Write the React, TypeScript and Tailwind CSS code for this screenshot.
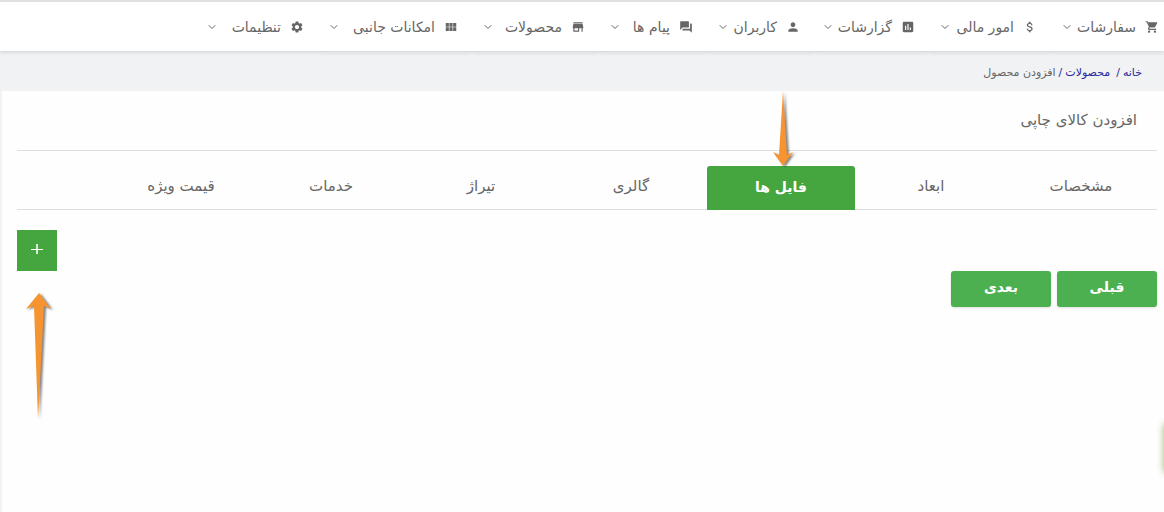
import { useState } from "react";
import type { IconType } from "react-icons";
import {
  MdAssessment,
  MdAttachMoney,
  MdForum,
  MdPerson,
  MdSettings,
  MdShoppingCart,
  MdStore,
  MdViewModule,
} from "react-icons/md";
import { FiChevronDown } from "react-icons/fi";

interface MenuItem {
  label: string;
  icon: IconType;
  width: string;
}

const menu: MenuItem[] = [
  { label: "سفارشات", icon: MdShoppingCart, width: "w-[122px]" },
  { label: "امور مالی", icon: MdAttachMoney, width: "w-[122px]" },
  { label: "گزارشات", icon: MdAssessment, width: "w-[115px]" },
  { label: "کاربران", icon: MdPerson, width: "w-[107px]" },
  { label: "پیام ها", icon: MdForum, width: "w-[108px]" },
  { label: "محصولات", icon: MdStore, width: "w-[127px]" },
  { label: "امکانات جانبی", icon: MdViewModule, width: "w-[154px]" },
  { label: "تنظیمات", icon: MdSettings, width: "w-[122px]" },
];

const tabs = ["مشخصات", "ابعاد", "فایل ها", "گالری", "تیراژ", "خدمات", "قیمت ویژه"];

function TopMenu() {
  return (
    <nav className="relative z-10 h-[51px] border-t-2 border-[#e0e0e0] bg-white pr-[5px] shadow-[0_1px_4px_rgba(0,0,0,0.15)]">
      <ul className="flex h-full items-stretch">
        {menu.map(({ label, icon: Icon, width }) => (
          <li
            key={label}
            className={`relative shrink-0 pl-6 after:absolute after:top-[52px] after:-right-[11px] after:left-[17px] after:h-px after:bg-[#e6e8ea] last:after:hidden ${width}`}
          >
            <button
              type="button"
              className="flex h-full w-full items-center justify-between gap-1 whitespace-nowrap"
            >
              <span className="flex items-center gap-[9px]">
                <Icon className="size-[14px] shrink-0" />
                <span>{label}</span>
              </span>
              <FiChevronDown className="size-3 shrink-0" />
            </button>
          </li>
        ))}
      </ul>
    </nav>
  );
}

function Breadcrumb() {
  return (
    <div className="flex h-10 items-center bg-[#f1f2f4] pt-[3px] pr-[22px] text-[11px]">
      <a href="#" className="text-[#2a2a9c]">
        خانه
      </a>
      <span className="mr-[3px] ml-[6px] text-[#2a2a9c]">/</span>
      <a href="#" className="text-[#2a2a9c]">
        محصولات
      </a>
      <span className="mx-[3px] text-[#2a2a9c]">/</span>
      <span>افزودن محصول</span>
    </div>
  );
}

export default function App() {
  const [active, setActive] = useState(2);

  return (
    <div
      dir="rtl"
      className="relative min-h-screen overflow-hidden bg-[#f3f3f3] font-['DejaVu_Sans',sans-serif] text-sm text-[#666]"
    >
      <TopMenu />
      <Breadcrumb />

      <main className="ml-[2px] min-h-[421px] bg-[#fefefe] pr-[7px] pl-[15px] text-[15px]">
        <h1 className="flex h-[60px] items-center border-b border-[#dedede] pr-5">
          افزودن کالای چاپی
        </h1>

        <div role="tablist" className="flex gap-[2px] border-b border-[#dedede] pt-[15px] pr-[2px]">
          {tabs.map((tab, i) => (
            <div key={tab} className="relative">
              {i === 2 && (
                <svg
                  className="pointer-events-none absolute bottom-full left-[64px] h-[75px] w-[30px] drop-shadow-[2px_1px_1px_rgba(0,0,0,0.5)]"
                  viewBox="0 0 30 75"
                >
                  <path d="M12 0 L8 64 L2 61 L12 75 L22 61 L16 64 Z" fill="#f79432" />
                </svg>
              )}
              <button
                type="button"
                role="tab"
                aria-selected={active === i}
                onClick={() => setActive(i)}
                className={`-mb-px h-[44px] w-[148px] rounded-t-[3px] pb-[3px] ${
                  active === i ? "bg-[#45a640] text-sm font-bold text-white" : ""
                }`}
              >
                {tab}
              </button>
            </div>
          ))}
        </div>

        <div className="flex justify-end pt-5">
          <div className="relative">
            <button
              type="button"
              aria-label="افزودن"
              className="flex h-[41px] w-10 items-center justify-center bg-[#45a640] pb-[3px] text-white"
            >
              <svg className="size-[12px]" viewBox="0 0 12 12" stroke="currentColor">
                <path d="M0 6.5 H12" />
                <path d="M6 1 V11" strokeWidth="1.6" />
              </svg>
            </button>
            <svg
              className="pointer-events-none absolute top-[63px] left-[8px] h-[126px] w-[30px] drop-shadow-[2px_1px_1px_rgba(0,0,0,0.5)]"
              viewBox="0 0 30 126"
            >
              <path d="M14 0 L26 16 L19 13 L13 126 L9 13 L1 16 Z" fill="#f79432" />
            </svg>
          </div>
        </div>

        <div className="flex gap-[6px] text-sm font-bold text-white">
          <button type="button" className="h-9 w-[100px] rounded-[3px] bg-[#4caf50] pb-1 shadow-sm">
            قبلی
          </button>
          <button type="button" className="h-9 w-[100px] rounded-[3px] bg-[#4caf50] pb-1 shadow-sm">
            بعدی
          </button>
        </div>
      </main>

      {/* edge of the collapsed side drawer */}
      <div className="absolute top-[424px] left-full h-[48px] w-10 shadow-[0_0_7px_#9db36a]" />
    </div>
  );
}
